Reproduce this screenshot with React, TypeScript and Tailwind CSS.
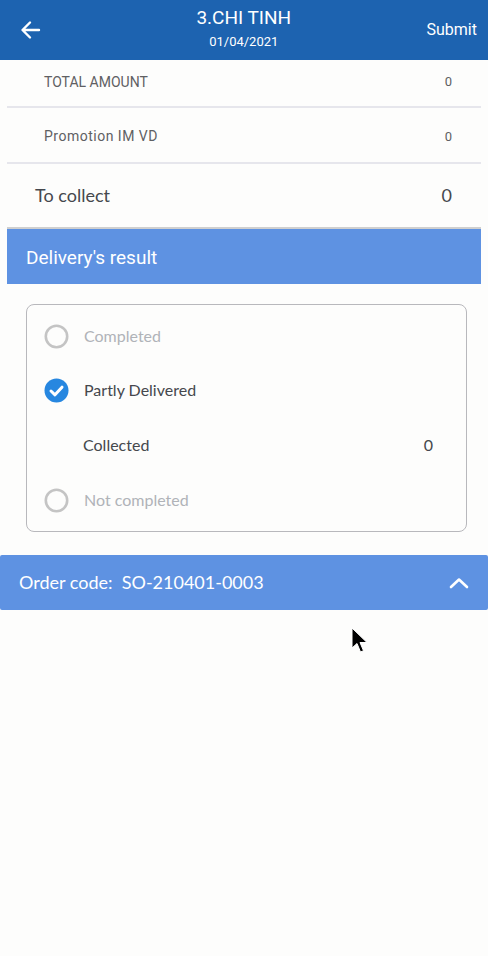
import React from "react";

const body = { fontFamily: "Lato, 'Open Sans', sans-serif" };
const rob = { fontFamily: "Roboto, 'Liberation Sans', sans-serif" };

function Radio({ checked }: { checked?: boolean }) {
  if (checked)
    return (
      <svg width="25" height="25" viewBox="0 0 25 25">
        <circle cx="12.5" cy="12.5" r="12" fill="#2787e0" />
        <path d="M7 13 L11 16.8 L18 9.2" stroke="#fff" strokeWidth="3" fill="none" strokeLinecap="round" strokeLinejoin="round" />
      </svg>
    );
  return (
    <svg width="25" height="25" viewBox="0 0 25 25">
      <circle cx="12.5" cy="12.5" r="10.7" fill="none" stroke="#c4c4c4" strokeWidth="2.6" />
    </svg>
  );
}

export default function App() {
  return (
    <div className="relative w-[488px] h-[956px] bg-[#fdfdfc] overflow-hidden">
      {/* Header */}
      <div className="h-[60px] bg-[#1d63b0] flex items-center px-5 text-white" style={rob}>
        <svg width="21" height="20" viewBox="0 0 21 20" className="shrink-0">
          <path d="M19 10 H3 M10 2.5 L2.5 10 L10 17.5" stroke="#fff" strokeWidth="2.4" fill="none" strokeLinecap="round" strokeLinejoin="round" />
        </svg>
        <div className="flex-1 flex flex-col items-center pl-[20px]">
          <div className="text-[19px] leading-[22px] mt-[-4px]">3.CHI TINH</div>
          <div className="text-[13px] leading-[16px] mt-[5px]">01/04/2021</div>
        </div>
        <div className="text-[16px] mr-[-9px]">Submit</div>
      </div>

      <div className="mx-[7px]" style={rob}>
        <div className="h-[48px] flex items-center justify-between pl-[37px] pr-[29px] pb-[2px] text-[14px] text-[#5f6063] border-b-2 border-[#e6e6ec]">
          <span>TOTAL AMOUNT</span>
          <span className="text-[13px]">0</span>
        </div>
        <div className="h-[56px] flex items-center justify-between pl-[37px] pr-[29px] pt-[3px] text-[14px] text-[#5f6063] border-b-2 border-[#e6e6ec]">
          <span className="tracking-[0.5px]">Promotion IM VD</span>
          <span className="text-[13px]">0</span>
        </div>
        <div className="h-[65px] flex items-center justify-between pl-[28px] pr-[29px] text-[18px] text-[#45484d] border-b-2 border-[#cfcfcf]" style={body}>
          <span>To collect</span>
          <span>0</span>
        </div>
        <div className="h-[55px] bg-[#5e92e2] flex items-center pl-[19px] pt-[3px] text-white text-[19px]" style={rob}>
          Delivery's result
        </div>
      </div>

      <div className="ml-[26px] mr-[21px] mt-[20px] border border-[#b8b8bc] rounded-[8px] h-[228px] flex flex-col justify-center pl-[17px] pr-[33px] text-[16px]" style={body}>
        <div className="h-[54px] flex items-center gap-[15px] text-[#b0b3b8]">
          <Radio />
          <span>Completed</span>
        </div>
        <div className="h-[54px] flex items-center gap-[15px] text-[#45484d]">
          <Radio checked />
          <span>Partly Delivered</span>
        </div>
        <div className="h-[56px] flex items-center justify-between pl-[39px] text-[#45484d]">
          <span>Collected</span>
          <span>0</span>
        </div>
        <div className="h-[54px] flex items-center gap-[15px] text-[#b0b3b8]">
          <Radio />
          <span>Not completed</span>
        </div>
      </div>

      <div className="mt-[23px] h-[55px] bg-[#5e92e2] rounded-[2px] flex items-center justify-between pl-[19px] pr-[19px] text-white text-[18px]" style={body}>
        <span>Order code:&nbsp; SO-210401-0003</span>
        <svg width="20" height="12" viewBox="0 0 20 12">
          <path d="M2 10 L10 2.5 L18 10" stroke="#fff" strokeWidth="2.6" fill="none" strokeLinecap="round" strokeLinejoin="round" />
        </svg>
      </div>

      {/* cursor */}
      <svg className="absolute left-[351px] top-[627px]" width="20" height="28" viewBox="0 0 20 28">
        <path d="M1 1 L1 21 L6 16.5 L9.5 25 L12.5 23.7 L9 15.5 L16 15.5 Z" fill="#000" stroke="#fff" strokeWidth="1" />
      </svg>
    </div>
  );
}
